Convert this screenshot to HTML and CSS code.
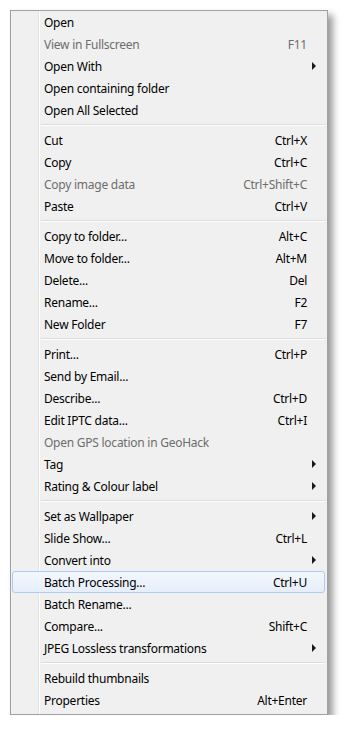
FILE: index.html
```html
<!DOCTYPE html>
<html lang="en">
<head>
  <meta charset="UTF-8" />
  <title>Context menu</title>
  <link rel="stylesheet" href="styles.css">
</head>
<body>
  <div class="menu">
    <div class="item"><span>Open</span></div>
    <div class="item disabled"><span>View in Fullscreen</span><span class="key">F11</span></div>
    <div class="item sub"><span>Open With</span></div>
    <div class="item"><span>Open containing folder</span></div>
    <div class="item"><span>Open All Selected</span></div>
    <div class="sep"></div>
    <div class="item"><span>Cut</span><span class="key">Ctrl+X</span></div>
    <div class="item"><span>Copy</span><span class="key">Ctrl+C</span></div>
    <div class="item disabled"><span>Copy image data</span><span class="key">Ctrl+Shift+C</span></div>
    <div class="item"><span>Paste</span><span class="key">Ctrl+V</span></div>
    <div class="sep"></div>
    <div class="item"><span>Copy to folder...</span><span class="key">Alt+C</span></div>
    <div class="item"><span>Move to folder...</span><span class="key">Alt+M</span></div>
    <div class="item"><span>Delete...</span><span class="key">Del</span></div>
    <div class="item"><span>Rename...</span><span class="key">F2</span></div>
    <div class="item"><span>New Folder</span><span class="key">F7</span></div>
    <div class="sep"></div>
    <div class="item"><span>Print...</span><span class="key">Ctrl+P</span></div>
    <div class="item"><span>Send by Email...</span></div>
    <div class="item"><span>Describe...</span><span class="key">Ctrl+D</span></div>
    <div class="item"><span>Edit IPTC data...</span><span class="key">Ctrl+I</span></div>
    <div class="item disabled"><span>Open GPS location in GeoHack</span></div>
    <div class="item sub"><span>Tag</span></div>
    <div class="item sub"><span>Rating &amp; Colour label</span></div>
    <div class="sep"></div>
    <div class="item sub"><span>Set as Wallpaper</span></div>
    <div class="item"><span>Slide Show...</span><span class="key">Ctrl+L</span></div>
    <div class="item sub"><span>Convert into</span></div>
    <div class="item hover"><span>Batch Processing...</span><span class="key">Ctrl+U</span></div>
    <div class="item"><span>Batch Rename...</span></div>
    <div class="item"><span>Compare...</span><span class="key">Shift+C</span></div>
    <div class="item sub"><span>JPEG Lossless transformations</span></div>
    <div class="sep"></div>
    <div class="item"><span>Rebuild thumbnails</span></div>
    <div class="item"><span>Properties</span><span class="key">Alt+Enter</span></div>
  </div>
</body>
</html>
```

FILE: styles.css
```css
*, *::before, *::after { box-sizing: border-box; }
body {
  margin: 0;
  background: #fff;
  font-family: 'Noto Sans', 'Open Sans', sans-serif;
  font-size: 12px;
  letter-spacing: -0.25px;
  color: #000;
}

/* メニュー本体 */
.menu {
  margin: 10px 0 0 10px;
  width: 318px;
  padding: 0 2px 3px 1px;
  border: 1px solid #a0a0a0;
  background:
    linear-gradient(to right, transparent 27px, #e2e3e3 27px, #e2e3e3 28px, #fff 28px, #fff 29px, transparent 29px),
    #f0f0f0;
  box-shadow: 5px 5px 7px rgba(0,0,0,.4);
}

.item {
  display: grid;
  grid-template-columns: 1fr auto 17px;
  align-items: center;
  height: 22px;
  padding-left: 31px;
  border: 1px solid transparent;
  border-radius: 3px;
  white-space: nowrap;
}
.item > span:first-child { grid-column: 1; }
.item .key { grid-column: 2; }
.item.disabled { color: #6d6d6d; }

/* サブメニュー矢印 */
.item.sub::after {
  content: '';
  grid-column: 3;
  margin-left: 5px;
  width: 0; height: 0;
  border-top: 4px solid transparent;
  border-bottom: 4px solid transparent;
  border-left: 4px solid #1a1a1a;
}

.item.hover {
  border-color: #aeccf1;
  background: linear-gradient(#f3f7fd, #e6eefa);
}

.sep {
  height: 8px;
  margin-left: 29px;
  background: linear-gradient(transparent 3px, #dcdcdc 3px, #dcdcdc 4px, #fff 4px, #fff 5px, transparent 5px);
}
```
